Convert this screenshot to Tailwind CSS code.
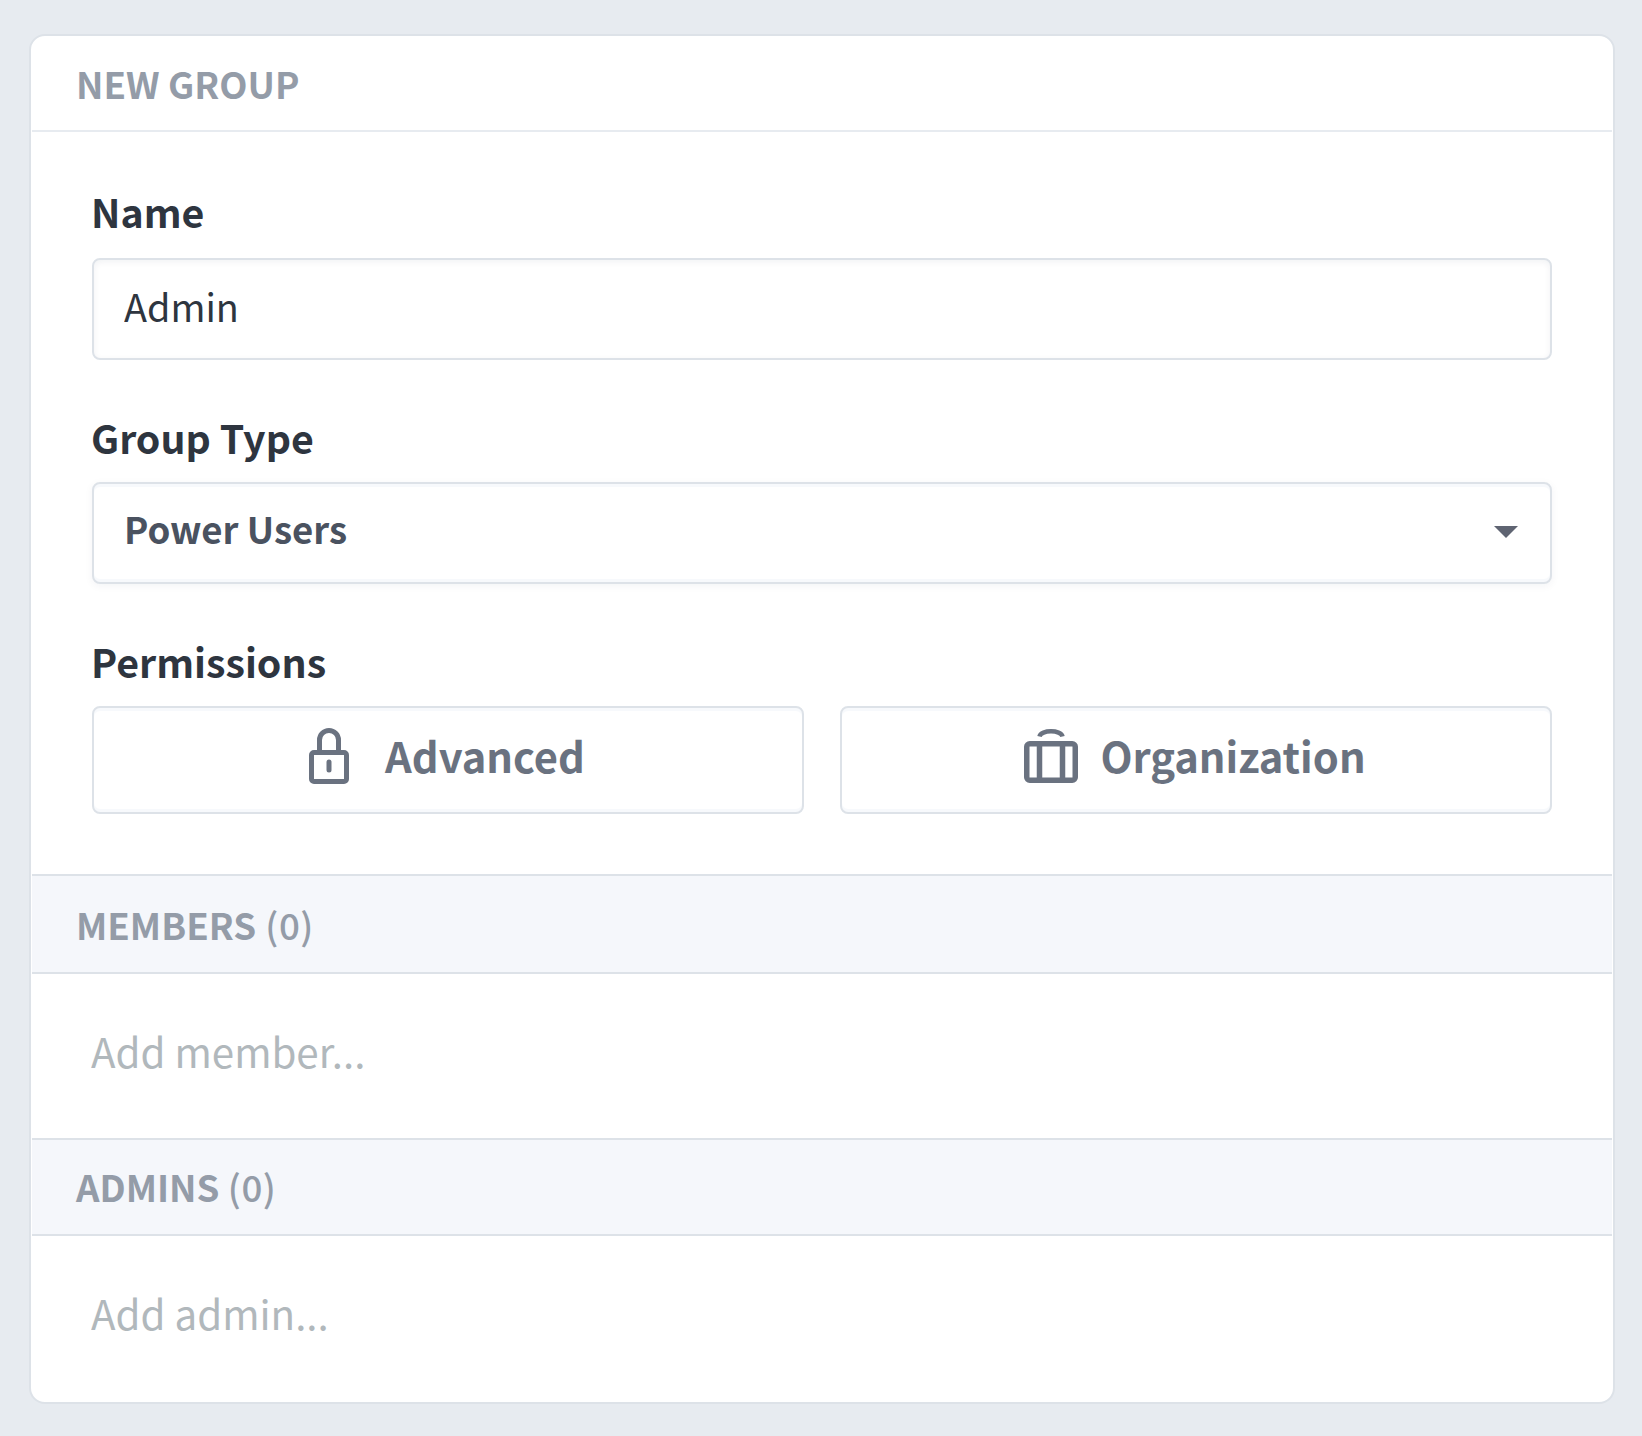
<!doctype html>
<html lang="en">
  <head>
    <meta charset="UTF-8" />
    <meta name="viewport" content="width=device-width, initial-scale=1.0" />
    <title>New Group</title>
    <script src="https://cdn.jsdelivr.net/npm/@tailwindcss/browser@4"></script>
  </head>
  <body class="bg-[#e7ebf0] h-[1436px] overflow-hidden pt-[34px] pl-[29px] font-['Noto_Sans_CJK_SC',sans-serif]">
    <div class="w-[1586px] h-[1370px] bg-white border-2 border-[#dde2e8] rounded-2xl flex flex-col overflow-hidden">
      <div class="mx-px h-[96px] shrink-0 border-b-2 border-[#e7ebf0] pl-[44px] pt-[1px] flex items-center">
        <h2 class="text-[36.7px] leading-none font-bold text-[#949ca8]">NEW GROUP</h2>
      </div>

      <form class="mx-px h-[742px] shrink-0 px-[60px] pt-[46px]">
        <label for="name" class="block -ml-px text-[39.3px] leading-[66px] h-[80px] font-bold text-[#2e353f]">Name</label>
        <input
          id="name"
          type="text"
          value="Admin"
          class="block w-full h-[102px] border-2 border-[#dde2e8] rounded-lg px-[30px] pb-[8px] text-[37.8px] text-[#2e353f] shadow-[inset_0_2px_6px_rgba(20,40,70,0.06)] outline-none"
        />
        <label for="type" class="block mt-[42px] -ml-px text-[39.3px] leading-[70px] h-[80px] font-bold text-[#2e353f]">Group Type</label>
        <div class="relative">
          <select
            id="type"
            class="block w-full h-[102px] appearance-none bg-white border-2 border-[#dde2e8] rounded-lg px-[30px] pb-[8px] text-[36.6px] font-bold text-[#4a5260] shadow-[inset_0_3px_1px_#f7f9fc,inset_0_-3px_1px_#f7f9fc,0_2px_8px_rgba(20,40,70,0.05)] outline-none"
          >
            <option>Power Users</option>
          </select>
          <svg class="absolute right-[34px] top-[44px] w-[24px] h-[12px]" viewBox="0 0 24 12"><path d="M0 0h24L12 12z" fill="#5f6472" /></svg>
        </div>
        <label class="block mt-[42px] -ml-px text-[39.3px] leading-[70px] h-[80px] font-bold text-[#2e353f]">Permissions</label>
        <div class="flex gap-[36px]">
          <button type="button" class="flex-1 h-[108px] bg-white border-2 border-[#dde2e8] rounded-lg pb-[8px] pr-[2px] flex items-center justify-center gap-[36px] text-[41.7px] font-bold text-[#6a7280] shadow-[inset_0_3px_1px_#f7f9fc,inset_0_-3px_1px_#f7f9fc]">
            <svg class="w-[40px] h-[56px]" viewBox="0 0 40 56" fill="none" stroke="#6a7280" stroke-width="5">
              <path d="M10.5 24V12a9.5 9.5 0 0 1 19 0v12" />
              <rect x="2.5" y="24.5" width="35" height="29" rx="2.5" />
              <path d="M20 34v8" stroke-width="5" stroke-linecap="round" />
            </svg>
            <span class="pb-[2px]">Advanced</span>
          </button>
          <button type="button" class="flex-1 h-[108px] bg-white border-2 border-[#dde2e8] rounded-lg pb-[8px] pr-[2px] flex items-center justify-center gap-[22px] text-[41.7px] font-bold text-[#6a7280] shadow-[inset_0_3px_1px_#f7f9fc,inset_0_-3px_1px_#f7f9fc]">
            <svg class="w-[54px] h-[54px]" viewBox="0 0 54 54" fill="none" stroke="#6a7280" stroke-width="5.5">
              <rect x="2.75" y="14.75" width="48.5" height="36.5" rx="3" />
              <path d="M15.5 15v36M38.5 15v36" />
              <path d="M15.5 7.5C17 0.5 37 0.5 38.5 7.5" stroke-width="4.5" />
            </svg>
            <span class="pb-[2px]">Organization</span>
          </button>
        </div>
      </form>

      <div class="mx-px h-[100px] shrink-0 border-y-2 border-[#dde2e8] bg-[#f5f7fb] pl-[44px] flex items-center">
        <h2 class="text-[36.7px] leading-none font-bold text-[#949ca8]">MEMBERS <span class="font-medium ml-[1px] tracking-[0.5px]">(0)</span></h2>
      </div>
      <div class="mx-px h-[164px] shrink-0 pl-[59px] pb-[10px] flex items-center">
        <input type="text" placeholder="Add member..." class="w-full text-[40.3px] outline-none placeholder:text-[#b1b8bc]" />
      </div>

      <div class="mx-px h-[98px] shrink-0 border-y-2 border-[#dde2e8] bg-[#f5f7fb] pl-[44px] pb-[2px] flex items-center">
        <h2 class="text-[36.7px] leading-none font-bold text-[#949ca8]">ADMINS <span class="font-medium tracking-[0.5px]">(0)</span></h2>
      </div>
      <div class="mx-px flex-1 pl-[59px] pb-[12px] flex items-center">
        <input type="text" placeholder="Add admin..." class="w-full text-[40.3px] outline-none placeholder:text-[#b1b8bc]" />
      </div>
    </div>
  </body>
</html>
